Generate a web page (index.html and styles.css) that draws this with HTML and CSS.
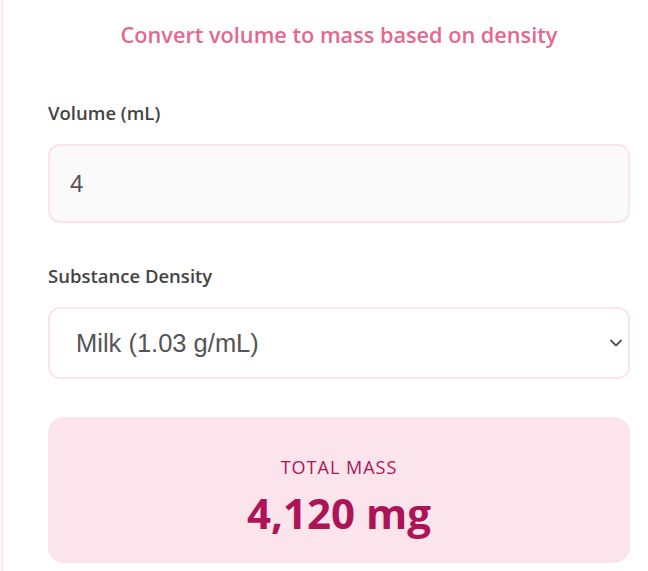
FILE: index.html
```html
<!DOCTYPE html>
<html lang="en">
<head>
    <meta charset="UTF-8">
    <meta name="viewport" content="width=device-width, initial-scale=1.0">
    <title>Volume to Mass</title>
    <link rel="stylesheet" href="styles.css">
</head>
<body>
    <div class="card">
        <p class="subtitle">Convert volume to mass based on density</p>

        <div class="field">
            <label class="label" for="volume">Volume (mL)</label>
            <input type="number" class="input" id="volume" value="4">
        </div>

        <div class="field">
            <label class="label" for="density">Substance Density</label>
            <div class="select-wrap">
                <select class="select" id="density">
                    <option value="1">Water (1.00 g/mL)</option>
                    <option value="1.03" selected>Milk (1.03 g/mL)</option>
                    <option value="1.42">Honey (1.42 g/mL)</option>
                    <option value="0.92">Olive Oil (0.92 g/mL)</option>
                </select>
                <svg class="chevron" width="14" height="8" viewBox="0 0 14 8">
                    <path d="M2 1.5 L7 6.5 L12 1.5" fill="none" stroke="#555" stroke-width="1.8" stroke-linecap="round" stroke-linejoin="round"/>
                </svg>
            </div>
        </div>

        <div class="result">
            <div class="result-label">TOTAL MASS</div>
            <div class="result-value" id="result">4,120 mg</div>
        </div>
    </div>
</body>
</html>
```

FILE: styles.css
```css
html, body {
    margin: 0;
    overflow: hidden;
    background: #fff;
}
body {
    font-family: "Open Sans", "Noto Sans", sans-serif;
    color: #444;
}
.card {
    margin-left: 1px;
    border-left: 2px solid #fce4ec;
    padding: 22px 18px 0 45px;
    min-height: 571px;
    box-sizing: border-box;
}
.subtitle {
    margin: 0 0 54px;
    text-align: center;
    color: #e3688f;
    font-size: 21.7px;
    font-weight: 600;
    line-height: 26px;
}
.field {
    margin-bottom: 42px;
}
.label {
    display: block;
    font-size: 18.5px;
    font-weight: 600;
    line-height: 22px;
    margin-bottom: 20px;
    color: #444;
}
.input,
.select {
    display: block;
    width: 100%;
    box-sizing: border-box;
    border: 2px solid #fce4ec;
    border-radius: 12px;
    font-family: "Liberation Sans", Arial, sans-serif;
    font-size: 24px;
    color: #555;
    outline: none;
}
.input {
    height: 79px;
    padding: 0 20px;
    background: #fafafa;
    -moz-appearance: textfield;
}
.input::-webkit-inner-spin-button,
.input::-webkit-outer-spin-button {
    -webkit-appearance: none;
    margin: 0;
}
.select-wrap {
    position: relative;
}
.select {
    height: 72px;
    padding: 0 40px 0 26px;
    font-size: 25.5px;
    background: #fff;
    -webkit-appearance: none;
    appearance: none;
}
.chevron {
    position: absolute;
    right: 7px;
    top: 32px;
    pointer-events: none;
}
.result {
    margin-top: -4px;
    height: 146px;
    box-sizing: border-box;
    background: #fce4ec;
    border-radius: 16px;
    text-align: center;
    padding-top: 39px;
}
.result-label {
    font-size: 18px;
    font-weight: 400;
    letter-spacing: 1px;
    color: #ad1457;
    line-height: 22px;
}
.result-value {
    margin-top: 10px;
    font-size: 42px;
    font-weight: 700;
    color: #ad1457;
    line-height: 50px;
}
```
